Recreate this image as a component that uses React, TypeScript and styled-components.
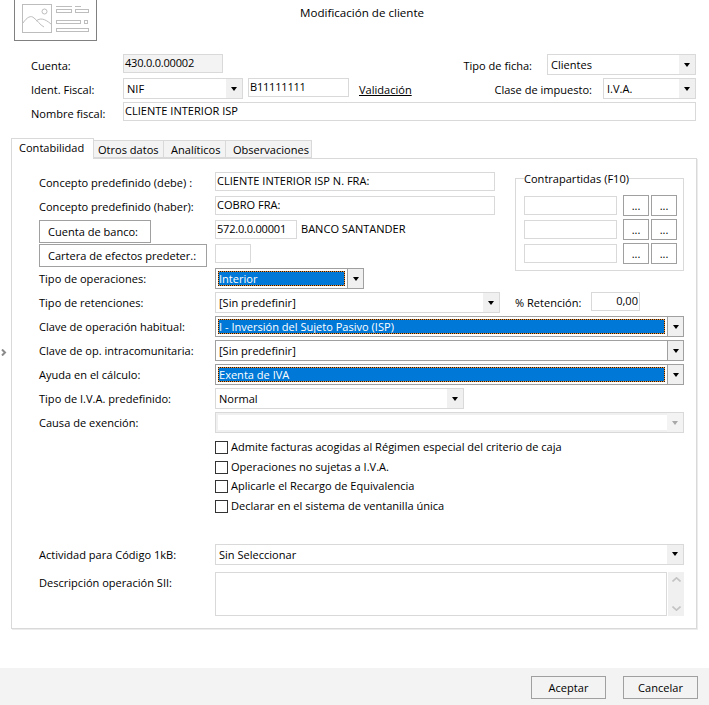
import styled, { createGlobalStyle } from "styled-components";

const GlobalStyle = createGlobalStyle`
  html, body {
    margin: 0;
    padding: 0;
    background: #fff;
  }
  body {
    font-family: "Open Sans", "Noto Sans", sans-serif;
    font-size: 11.05px;
    color: #000;
  }
  * {
    box-sizing: border-box;
  }
`;

const Page = styled.div`
  position: relative;
  display: flex;
  flex-direction: column;
  width: 709px;
  height: 705px;
  overflow: hidden;
`;

const Header = styled.div`
  display: flex;
  height: 54px;
  padding-left: 14px;
`;

const IconBox = styled.div`
  width: 83px;
  height: 41px;
  border: 1px solid #808080;
  border-top: none;
`;

const Title = styled.div`
  margin: 4px 0 0 203px;
  font-size: 11.6px;
  line-height: 18px;
`;

const TopForm = styled.div`
  display: flex;
  flex-direction: column;
  padding: 0 13px 0 31px;
  height: 84px;
`;

const TopRow = styled.div`
  display: flex;
  align-items: flex-start;
  height: 24px;
`;

const TopLabel = styled.div`
  width: 92px;
  line-height: 16px;
  padding-top: 4px;
`;

const SideLabel = styled.div<{ $gap: number }>`
  margin-left: auto;
  margin-right: ${({ $gap }) => $gap}px;
  line-height: 16px;
  padding-top: 4px;
`;

const Field = styled.div<{ $width?: number; $bg?: string; $right?: boolean; $gap?: number; $numeric?: boolean }>`
  flex: ${({ $width }) => ($width ? "none" : "1")};
  width: ${({ $width }) => ($width ? `${$width}px` : "auto")};
  height: 19px;
  margin-left: ${({ $gap }) => $gap ?? 0}px;
  padding: 0 1px 0 1px;
  border: 1px solid #d9d9d9;
  background: ${({ $bg }) => $bg ?? "#fff"};
  line-height: 15px;
  letter-spacing: ${({ $numeric }) => ($numeric ? "-0.22px" : "normal")};
  text-align: ${({ $right }) => ($right ? "right" : "left")};
  white-space: nowrap;
  overflow: hidden;
`;

const LinkText = styled.a`
  margin: 4px 0 0 10px;
  line-height: 16px;
  color: #000;
  text-decoration: underline;
`;

const SelectBox = styled.div<{ $width: number; $dark?: boolean }>`
  display: flex;
  flex: none;
  width: ${({ $width }) => $width}px;
  height: 21px;
  border: 1px solid ${({ $dark }) => ($dark ? "#a0a0a0" : "#d9d9d9")};
  background: #fff;
`;

const SelectValue = styled.div`
  flex: 1;
  padding-left: 3px;
  line-height: 20px;
  white-space: nowrap;
  overflow: hidden;
`;

const SelectedValue = styled.div`
  flex: 1;
  height: 15px;
  margin: 2px;
  border: 1px dotted #1a1a1a;
  background-color: #f09030;
  background-image: linear-gradient(#0078d7, #0078d7);
  background-origin: padding-box;
  background-clip: border-box;
  background-repeat: no-repeat;
  color: #fff;
  line-height: 14px;
  white-space: nowrap;
  overflow: hidden;
`;

const ArrowCell = styled.div<{ $dark?: boolean; $off?: boolean }>`
  display: flex;
  align-items: center;
  justify-content: center;
  flex: none;
  width: 16px;
  background: ${({ $off }) => ($off ? "#f3f3f3" : "#f0f0f0")};
  border-left: ${({ $dark }) => ($dark ? "1px solid #a0a0a0" : "none")};
  &::after {
    content: "";
    border-left: 3.5px solid transparent;
    border-right: 3.5px solid transparent;
    border-top: 4px solid ${({ $off }) => ($off ? "#a8a8a8" : "#000")};
  }
`;

const DisabledInner = styled.div`
  flex: 1;
  border: 2px solid #f0f0f0;
  border-right: none;
  background: #fff;
`;

const Tabs = styled.div`
  display: flex;
  align-items: flex-end;
  height: 20px;
  margin: 0 0 0 11px;
`;

const Tab = styled.div<{ $active?: boolean; $width: number; $pad: number }>`
  position: relative;
  z-index: ${({ $active }) => ($active ? 1 : 0)};
  width: ${({ $width }) => $width}px;
  height: ${({ $active }) => ($active ? 21 : 18)}px;
  margin-bottom: ${({ $active }) => ($active ? -1 : 0)}px;
  padding-left: ${({ $pad }) => $pad}px;
  border: 1px solid #d9d9d9;
  border-left-width: ${({ $active }) => ($active ? 1 : 0)}px;
  border-bottom: ${({ $active }) => ($active ? "none" : "1px solid #d9d9d9")};
  background: ${({ $active }) => ($active ? "#fff" : "#f3f3f3")};
  line-height: 18px;
  white-space: nowrap;
`;

const Panel = styled.div`
  display: flex;
  flex-direction: column;
  width: 686px;
  height: 471px;
  margin-left: 11px;
  padding: 13px 12px 0 27px;
  border: 1px solid #d9d9d9;
  box-shadow: 1px 1px 0 #ececec;
`;

const UpperBlock = styled.div`
  display: flex;
  align-items: flex-start;
  height: 120px;
`;

const UpperLeft = styled.div`
  width: 476px;
`;

const FormRow = styled.div<{ $height?: number }>`
  display: flex;
  align-items: flex-start;
  height: ${({ $height }) => $height ?? 24}px;
`;

const RowLabel = styled.div`
  flex: none;
  width: 176px;
  line-height: 16px;
  padding-top: 3px;
  white-space: nowrap;
`;

const ButtonSlot = styled.div`
  flex: none;
  width: 176px;
`;

const OutlineButton = styled.div<{ $width: number; $align?: string }>`
  width: ${({ $width }) => $width}px;
  height: 23px;
  padding-left: ${({ $align }) => ($align ? 0 : 8)}px;
  border: 1px solid #a0a0a0;
  line-height: 21px;
  text-align: ${({ $align }) => $align ?? "left"};
  white-space: nowrap;
  background: transparent;
`;

const PlainText = styled.div`
  margin-left: 4px;
  line-height: 18px;
  white-space: nowrap;
`;

const GroupBox = styled.div`
  width: 169px;
  height: 93px;
  margin-top: 6px;
  border: 1px solid #d9d9d9;
`;

const GroupLegend = styled.div`
  width: fit-content;
  height: 16px;
  margin: -8px 0 0 8px;
  background: #fff;
  line-height: 16px;
  white-space: nowrap;
`;

const GroupRows = styled.div`
  display: flex;
  flex-direction: column;
  padding: 8px 0 0 8px;
`;

const GroupRow = styled.div`
  display: flex;
  align-items: flex-start;
  height: 24px;
`;

const GroupField = styled(Field)`
  margin-top: 1px;
`;

const DotsButton = styled.div<{ $gap: number }>`
  width: 26px;
  height: 21px;
  margin-left: ${({ $gap }) => $gap}px;
  border: 1px solid #a0a0a0;
  text-align: center;
  line-height: 20px;
`;

const RetentionLabel = styled.div`
  margin-left: 15px;
  width: 76px;
  line-height: 16px;
  padding-top: 3px;
  white-space: nowrap;
`;

const CheckList = styled.div`
  display: flex;
  flex-direction: column;
  gap: 6.5px;
  margin: 5px 0 0 176px;
`;

const CheckRow = styled.div`
  display: flex;
  align-items: flex-start;
  gap: 3px;
  height: 13px;
`;

const CheckSquare = styled.div`
  flex: none;
  width: 13px;
  height: 13px;
  border: 1px solid #333;
  background: #fff;
`;

const CheckText = styled.span`
  line-height: 11px;
`;

const LowerBlock = styled.div`
  margin-top: 31px;
`;

const TextArea = styled.div`
  flex: none;
  width: 452px;
  height: 44px;
  border: 1px solid #d9d9d9;
`;

const ScrollBar = styled.div`
  display: flex;
  flex-direction: column;
  justify-content: space-between;
  align-items: center;
  flex: none;
  width: 16px;
  height: 44px;
  margin-left: 1px;
  padding: 5px 0;
  background: #f0f0f0;
  color: #c4c4c4;
`;

const Footer = styled.div`
  display: flex;
  justify-content: flex-end;
  gap: 17px;
  margin-top: auto;
  height: 37px;
  padding: 8px 11px 0 0;
  background: #f3f3f3;
`;

const SideGrip = styled.svg`
  position: absolute;
  left: 1px;
  top: 349px;
`;

const ScreenIcon = () => (
  <svg width="81" height="40" viewBox="15 0 81 40" fill="none" stroke="#bdbdbd" strokeWidth="1" style={{ display: "block" }}>
    <rect x="22.5" y="4.5" width="29" height="28" />
    <circle cx="44.5" cy="11.5" r="2.5" />
    <path d="M23 23 C27 17 31 15 34 18 C37 20 40 25 44 27 M36 21 C40 18 44 18 51 24" />
    <path d="M56 6.5 H72 M75 6.5 H81" />
    <rect x="56.5" y="9.5" width="15" height="3" />
    <rect x="75.5" y="9.5" width="13" height="3" />
    <rect x="56.5" y="20.5" width="24" height="3" />
    <rect x="84.5" y="20.5" width="3" height="3" />
    <rect x="56.5" y="28.5" width="32" height="3" />
  </svg>
);

const Select = ({ width, value, dark }: { width: number; value: string; dark?: boolean }) => (
  <SelectBox $width={width} $dark={dark}>
    <SelectValue>{value}</SelectValue>
    <ArrowCell $dark={dark} />
  </SelectBox>
);

const FocusSelect = ({ width, value }: { width: number; value: string }) => (
  <SelectBox $width={width} $dark>
    <SelectedValue>{value}</SelectedValue>
    <ArrowCell $dark />
  </SelectBox>
);

const checks = [
  "Admite facturas acogidas al Régimen especial del criterio de caja",
  "Operaciones no sujetas a I.V.A.",
  "Aplicarle el Recargo de Equivalencia",
  "Declarar en el sistema de ventanilla única",
];

export default function App() {
  return (
    <Page>
      <GlobalStyle />
      <SideGrip width="6" height="7" viewBox="0 0 6 7" fill="none" stroke="#8a8a8a" strokeWidth="2">
        <path d="M1 0.5 L4 3.5 L1 6.5" />
      </SideGrip>
      <Header>
        <IconBox>
          <ScreenIcon />
        </IconBox>
        <Title>Modificación de cliente</Title>
      </Header>
      <TopForm>
        <TopRow>
          <TopLabel>Cuenta:</TopLabel>
          <Field $width={100} $bg="#f3f3f3" $numeric>430.0.0.00002</Field>
          <SideLabel $gap={15}>Tipo de ficha:</SideLabel>
          <Select width={149} value="Clientes" />
        </TopRow>
        <TopRow>
          <TopLabel>Ident. Fiscal:</TopLabel>
          <Select width={120} value="NIF" />
          <Field $width={101} $gap={5} $numeric>B11111111</Field>
          <LinkText>Validación</LinkText>
          <SideLabel $gap={11}>Clase de impuesto:</SideLabel>
          <Select width={93} value="I.V.A." />
        </TopRow>
        <TopRow>
          <TopLabel>Nombre fiscal:</TopLabel>
          <Field>CLIENTE INTERIOR ISP</Field>
        </TopRow>
      </TopForm>
      <Tabs>
        <Tab $active $width={83} $pad={7}>Contabilidad</Tab>
        <Tab $width={70} $pad={4}>Otros datos</Tab>
        <Tab $width={62} $pad={7}>Analíticos</Tab>
        <Tab $width={86} $pad={7}>Observaciones</Tab>
      </Tabs>
      <Panel>
        <UpperBlock>
          <UpperLeft>
            <FormRow>
              <RowLabel>Concepto predefinido (debe) :</RowLabel>
              <Field $width={280}>CLIENTE INTERIOR ISP N. FRA:</Field>
            </FormRow>
            <FormRow>
              <RowLabel>Concepto predefinido (haber):</RowLabel>
              <Field $width={280}>COBRO FRA:</Field>
            </FormRow>
            <FormRow>
              <ButtonSlot>
                <OutlineButton $width={112}>Cuenta de banco:</OutlineButton>
              </ButtonSlot>
              <Field $width={82} $numeric>572.0.0.00001</Field>
              <PlainText>BANCO SANTANDER</PlainText>
            </FormRow>
            <FormRow>
              <ButtonSlot>
                <OutlineButton $width={168}>Cartera de efectos predeter.:</OutlineButton>
              </ButtonSlot>
              <Field $width={36} />
            </FormRow>
            <FormRow>
              <RowLabel>Tipo de operaciones:</RowLabel>
              <FocusSelect width={149} value="Interior" />
            </FormRow>
          </UpperLeft>
          <GroupBox>
            <GroupLegend>Contrapartidas (F10)</GroupLegend>
            <GroupRows>
              {[0, 1, 2].map((row) => (
                <GroupRow key={row}>
                  <GroupField $width={93} />
                  <DotsButton $gap={6}>...</DotsButton>
                  <DotsButton $gap={2}>...</DotsButton>
                </GroupRow>
              ))}
            </GroupRows>
          </GroupBox>
        </UpperBlock>
        <FormRow>
          <RowLabel>Tipo de retenciones:</RowLabel>
          <Select width={285} value="[Sin predefinir]" />
          <RetentionLabel>% Retención:</RetentionLabel>
          <Field $width={49} $right>0,00</Field>
        </FormRow>
        <FormRow>
          <RowLabel>Clave de operación habitual:</RowLabel>
          <FocusSelect width={469} value="I - Inversión del Sujeto Pasivo (ISP)" />
        </FormRow>
        <FormRow>
          <RowLabel>Clave de op. intracomunitaria:</RowLabel>
          <Select width={469} value="[Sin predefinir]" dark />
        </FormRow>
        <FormRow>
          <RowLabel>Ayuda en el cálculo:</RowLabel>
          <FocusSelect width={469} value="Exenta de IVA" />
        </FormRow>
        <FormRow>
          <RowLabel>Tipo de I.V.A. predefinido:</RowLabel>
          <Select width={249} value="Normal" />
        </FormRow>
        <FormRow>
          <RowLabel>Causa de exención:</RowLabel>
          <SelectBox $width={469}>
            <DisabledInner />
            <ArrowCell $off />
          </SelectBox>
        </FormRow>
        <CheckList>
          {checks.map((text) => (
            <CheckRow key={text}>
              <CheckSquare />
              <CheckText>{text}</CheckText>
            </CheckRow>
          ))}
        </CheckList>
        <LowerBlock>
          <FormRow $height={28}>
            <RowLabel>Actividad para Código 1kB:</RowLabel>
            <Select width={469} value="Sin Seleccionar" />
          </FormRow>
          <FormRow $height={44}>
            <RowLabel>Descripción operación SII:</RowLabel>
            <TextArea />
            <ScrollBar>
              <svg width="9" height="5" viewBox="0 0 9 5" fill="none" stroke="currentColor" strokeWidth="1.6">
                <path d="M0.5 4.5 L4.5 0.8 L8.5 4.5" />
              </svg>
              <svg width="9" height="5" viewBox="0 0 9 5" fill="none" stroke="currentColor" strokeWidth="1.6">
                <path d="M0.5 0.5 L4.5 4.2 L8.5 0.5" />
              </svg>
            </ScrollBar>
          </FormRow>
        </LowerBlock>
      </Panel>
      <Footer>
        <OutlineButton $width={75} $align="center">Aceptar</OutlineButton>
        <OutlineButton $width={75} $align="center">Cancelar</OutlineButton>
      </Footer>
    </Page>
  );
}
